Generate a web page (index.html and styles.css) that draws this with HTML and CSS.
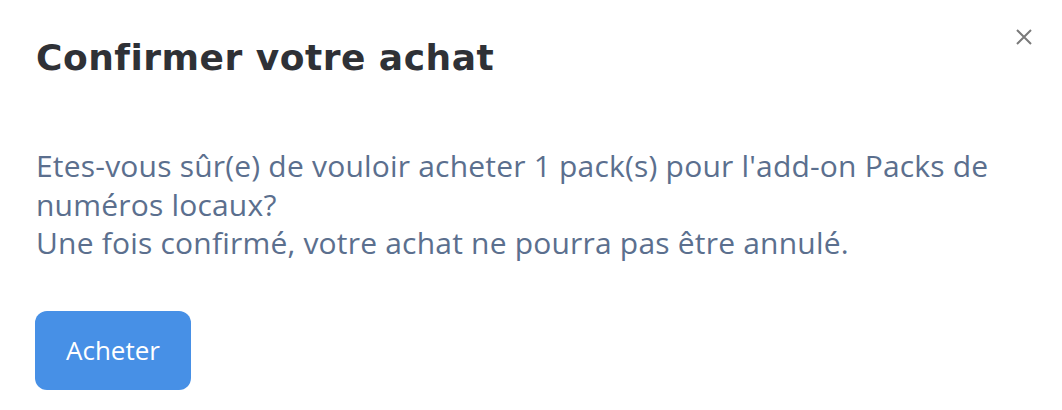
FILE: index.html
```html
<!DOCTYPE html>
<html lang="fr">
<head>
    <meta charset="UTF-8">
    <title>Confirmer votre achat</title>
    <link rel="stylesheet" href="styles.css">
</head>
<body>
    <div class="modal">
        <button class="close" aria-label="Fermer">
            <svg width="18" height="18" viewBox="0 0 18 18">
                <path d="M2 2 L16 16 M16 2 L2 16" stroke="#7a7a7a" stroke-width="2" fill="none"/>
            </svg>
        </button>
        <h2 class="title">Confirmer votre achat</h2>
        <p class="text">
            Etes-vous sûr(e) de vouloir acheter 1 pack(s) pour l'add-on Packs de numéros locaux?<br>
            Une fois confirmé, votre achat ne pourra pas être annulé.
        </p>
        <button class="buy">Acheter</button>
    </div>
</body>
</html>
```

FILE: styles.css
```css
body {
    margin: 0;
    background: #fff;
    font-family: 'Open Sans', sans-serif;
}

.modal {
    position: relative;
    width: 1062px;
    height: 410px;
    padding: 24px 36px 0;
    box-sizing: border-box;
}

.close {
    position: absolute;
    top: 28px;
    right: 29px;
    background: none;
    border: 0;
    padding: 0;
    cursor: pointer;
}

.title {
    margin: 0;
    font-family: 'DejaVu Sans', sans-serif;
    font-weight: 700;
    font-size: 36px;
    line-height: 68px;
    letter-spacing: 0.5px;
    color: #2f3136;
}

.text {
    margin: 55px 0 0;
    font-size: 30px;
    line-height: 38.5px;
    letter-spacing: 0.2px;
    color: #5b6f8e;
}

.buy {
    display: block;
    margin: 48px 0 0 -1px;
    width: 156px;
    height: 79px;
    background: #4790e6;
    border: 0;
    border-radius: 12px;
    color: #fff;
    font-family: 'Open Sans', sans-serif;
    font-size: 26px;
    cursor: pointer;
}
```
